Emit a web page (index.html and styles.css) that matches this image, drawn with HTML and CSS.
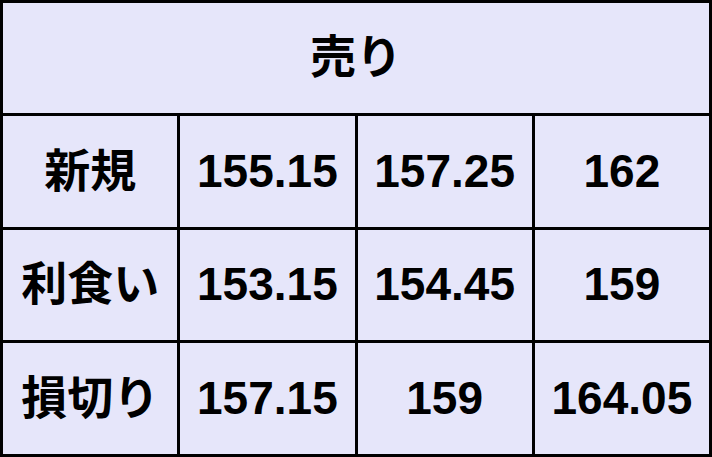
FILE: index.html
```html
<!DOCTYPE html>
<html lang="ja">
<head>
<meta charset="utf-8">
<link rel="stylesheet" href="styles.css">
</head>
<body>
<table class="price-table">
  <thead>
    <tr><th class="head" colspan="4">売り</th></tr>
  </thead>
  <tbody>
    <tr><th class="label">新規</th><td>155.15</td><td>157.25</td><td>162</td></tr>
    <tr><th class="label">利食い</th><td>153.15</td><td>154.45</td><td>159</td></tr>
    <tr><th class="label">損切り</th><td>157.15</td><td>159</td><td>164.05</td></tr>
  </tbody>
</table>
</body>
</html>
```
FILE: styles.css
```css
html, body {
  margin: 0;
  padding: 0;
  background: #ffffff;
}
.price-table {
  width: 712px;
  height: 457px;
  border-collapse: separate;
  border-spacing: 3px;
  background: #000000;
  table-layout: fixed;
  font-family: "Liberation Sans", "Noto Sans CJK JP", sans-serif;
  font-size: 46px;
  font-weight: 700;
  color: #000000;
}
.price-table th,
.price-table td {
  background: #e6e6fa;
  padding: 0;
  text-align: center;
  vertical-align: middle;
  font-weight: 700;
  line-height: 1.2;
}
.price-table tr {
  height: 110px;
}
```
